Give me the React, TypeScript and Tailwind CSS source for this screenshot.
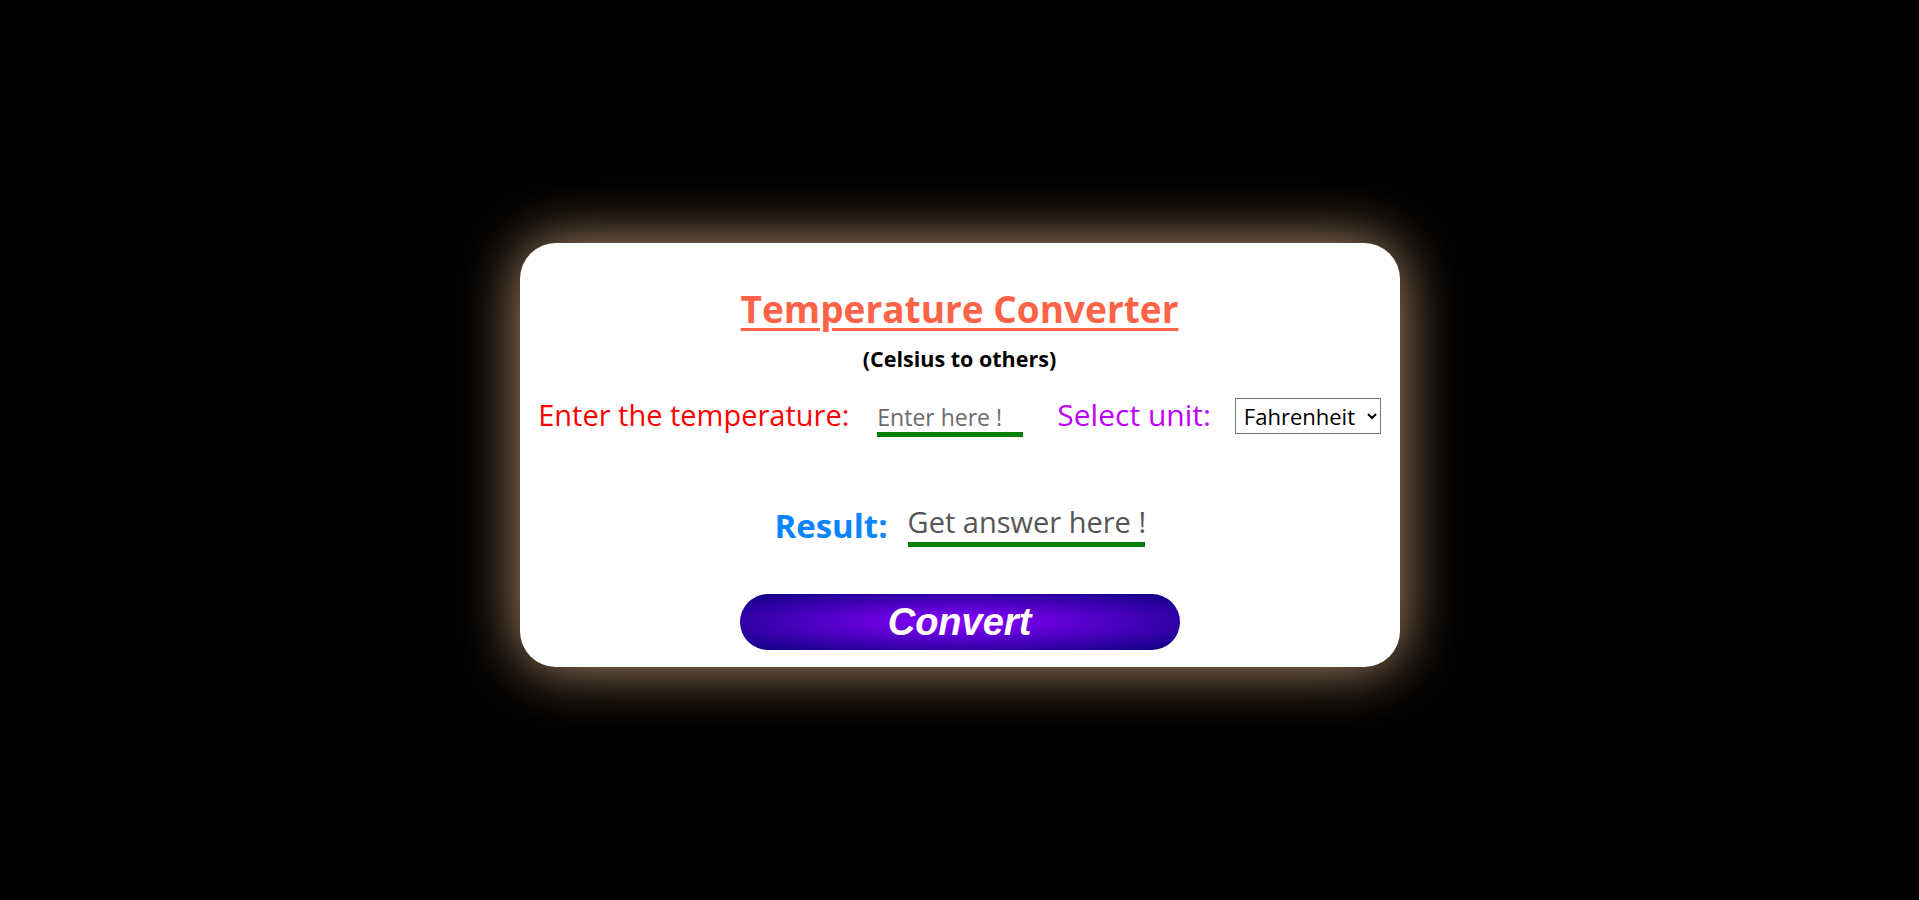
import { useState } from "react";

export default function App() {
  const [temp, setTemp] = useState("");
  const [unit, setUnit] = useState("fahrenheit");
  const [result, setResult] = useState("");

  const convert = () => {
    const c = parseFloat(temp);
    if (isNaN(c)) {
      setResult("");
      return;
    }
    let out = c;
    if (unit === "fahrenheit") out = (c * 9) / 5 + 32;
    if (unit === "kelvin") out = c + 273.15;
    setResult(out.toFixed(2));
  };

  return (
    <div className="flex min-h-screen items-center justify-center bg-black pt-[10px] font-['Open_Sans',sans-serif]">
      {/* Card */}
      <div className="flex w-[880px] flex-col items-center rounded-[36px] bg-white pt-[44px] pb-[17px] shadow-[0_0_60px_rgb(190,150,115)]">
        <h1 className="text-[37px] leading-[44px] font-bold text-[#ff6347] underline decoration-[3px] underline-offset-[5px]">
          Temperature Converter
        </h1>
        <p className="mt-[16px] text-[21.5px] leading-[24px] font-bold text-black">
          (Celsius to others)
        </p>

        {/* Input row */}
        <div className="mt-[22px] flex h-[44px] items-center whitespace-nowrap">
          <label className="shrink-0 text-[29px] leading-[40px] text-[#ff0000]">
            Enter the temperature:
          </label>
          <input
            type="text"
            value={temp}
            onChange={(e) => setTemp(e.target.value)}
            placeholder="Enter here !"
            className="ml-[28px] h-[44px] w-[146px] shrink-0 border-b-[5px] border-[#008000] pt-[8px] text-[23px] leading-[31px] text-[#444] outline-none placeholder:text-[#6b6b6b]"
          />
          <label className="ml-[34px] shrink-0 text-[30px] leading-[40px] text-[#bf00ff]">
            Select unit:
          </label>
          <select
            value={unit}
            onChange={(e) => setUnit(e.target.value)}
            className="mt-[2px] ml-[24px] h-[36px] w-[146px] shrink-0 border border-[#767676] bg-white pl-[4px] text-[22px] text-black"
          >
            <option value="fahrenheit">Fahrenheit</option>
            <option value="kelvin">Kelvin</option>
          </select>
        </div>

        {/* Result row */}
        <div className="mt-[64px] flex items-start whitespace-nowrap">
          <span className="mt-[3px] text-[33px] leading-[44px] font-bold text-[#0a84ff]">
            Result:
          </span>
          <input
            type="text"
            readOnly
            value={result}
            placeholder="Get answer here !"
            className="ml-[20px] h-[46px] w-[237px] border-b-[5px] border-[#008000] text-[29px] leading-[38px] text-[#444] outline-none placeholder:text-[#555]"
          />
        </div>

        <button
          onClick={convert}
          className="mt-[46px] h-[56px] w-[440px] rounded-full bg-[radial-gradient(#8a00ff,#0c0080)] font-['Liberation_Sans',sans-serif] text-[38px] leading-[56px] font-bold text-white italic"
        >
          Convert
        </button>
      </div>
    </div>
  );
}
